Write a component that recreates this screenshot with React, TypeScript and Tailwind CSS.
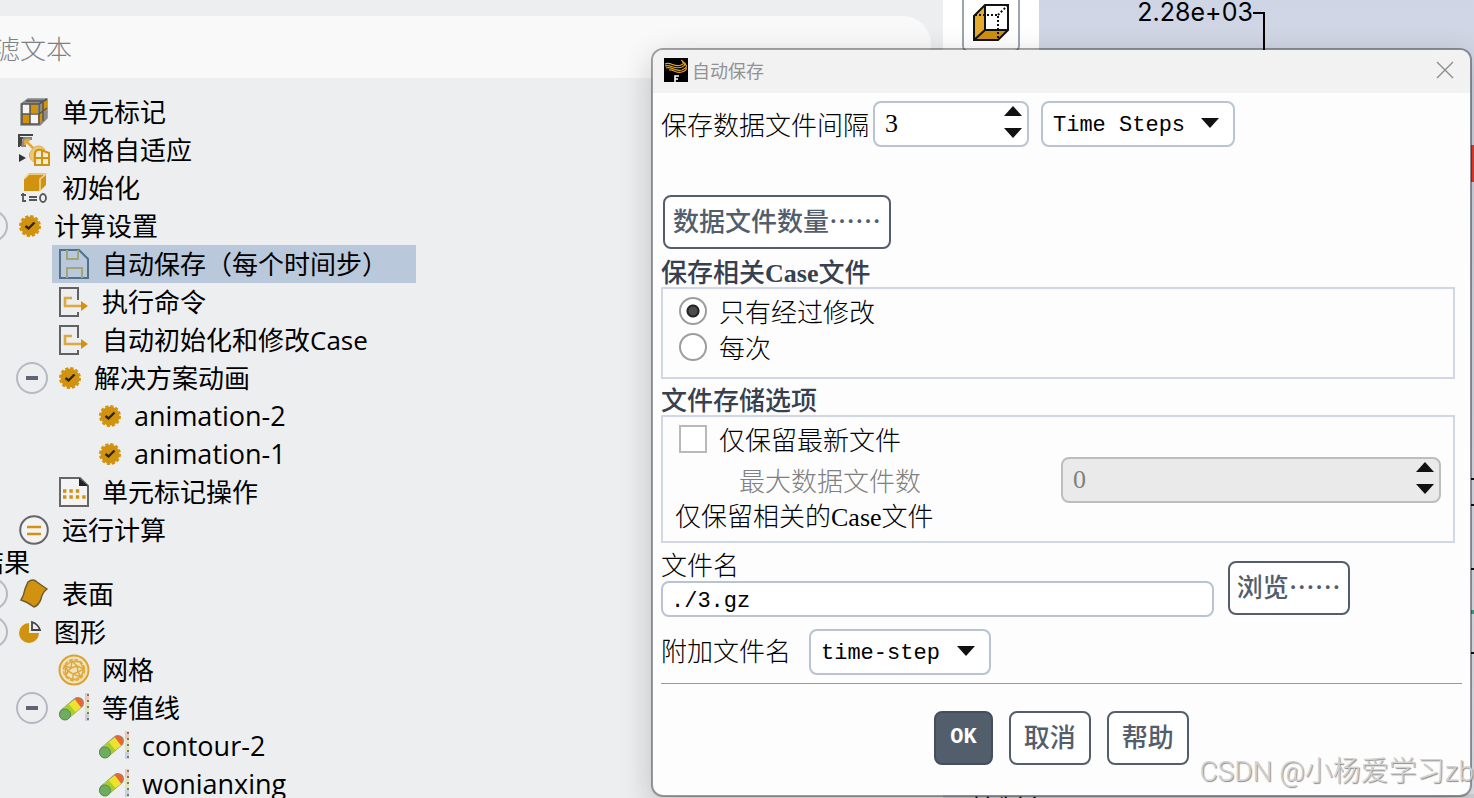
import { useState } from "react";
import type { ReactNode } from "react";

const GOLD = "#d1930f";

const CellCubeIcon = () => (
  <svg width="30" height="30" viewBox="0 0 30 30">
    <path d="M2 7L9 2H28V21L21 28H2Z" fill="#8b8b8b" stroke="#888" strokeWidth="1.5" />
    <path d="M3 7H20V27H3Z" fill="#f4f4f4" />
    <path d="M11 7h8v9h-8zM3 17h8v10H3z" fill={GOLD} />
    <path d="M23 6l5-3v10l-5 4zM19 18l5-4v9l-5 4z" fill={GOLD} />
    <path d="M3 7h17v20H3zM11 7v20M3 17h17l8-6M20 7l8-5M24 5v19M7 4h17" fill="none" stroke="#555" strokeWidth="1.5" />
  </svg>
);

const AdaptIcon = () => (
  <svg width="34" height="34" viewBox="0 0 34 34">
    <path d="M2 14V2H16M4 13V5H14" fill="none" stroke="#444" strokeWidth="2" />
    <path d="M6 4h9v3H9v7H4z" fill="#888" />
    <path d="M8 7L17 16M8 7v5M8 7h5" stroke="#e0a83a" strokeWidth="2.5" />
    <path d="M2 21l7 4-7 4z" fill="#333" />
    <path d="M14 18C17 12 25 11 28 17C25 15 19 17 17 20V29C13 27 11 22 14 18Z" fill="#ecc878" stroke="#e0b050" />
    <path d="M18 20Q19 16 24 17L32 20V32H18ZM25 18v14M18 25h14" fill="#f5ebd4" stroke={GOLD} strokeWidth="2" />
  </svg>
);

const InitIcon = () => (
  <svg width="30" height="34" viewBox="0 0 30 34">
    <path d="M5 8L10 2H27V14L21 20H5Z" fill={GOLD} />
    <path d="M5 8L10 3H27L21 8V20" fill="none" stroke="#f2d89b" strokeWidth="1.5" />
    <path d="M4 22v8h3M2 24h5M10 26h8M10 29h8" fill="none" stroke="#555" strokeWidth="1.8" />
    <ellipse cx="24" cy="27" rx="3" ry="4" fill="none" stroke="#555" strokeWidth="1.8" />
  </svg>
);

const GearCheckIcon = () => (
  <svg width="24" height="24" viewBox="0 0 24 24">
    <circle cx="12" cy="12" r="9.5" fill={GOLD} />
    <circle cx="12" cy="12" r="10" fill="none" stroke={GOLD} strokeWidth="2" strokeDasharray="3.2 2.036" />
    <path d="M7.5 12L10.5 14.5L16.5 8.5" fill="none" stroke="#2b2413" strokeWidth="2.4" />
  </svg>
);

const FloppyIcon = () => (
  <svg width="32" height="32" viewBox="0 0 32 32">
    <path d="M2 2H21L30 11V30H2Z" fill="none" stroke="#53708a" strokeWidth="2" />
    <path d="M9 2V11H20V2M9 30V20H24V30" fill="none" stroke="#a3a577" strokeWidth="2" />
  </svg>
);

const CommandIcon = () => (
  <svg width="32" height="32" viewBox="0 0 32 32">
    <path d="M20 14V2H2V30H20V26" fill="none" stroke="#626262" strokeWidth="2" />
    <path d="M14 12H7V20H24" fill="none" stroke="#dda841" strokeWidth="2.6" />
    <path d="M23 15L30 20L23 25Z" fill={GOLD} />
  </svg>
);

const CellFileIcon = () => (
  <svg width="32" height="32" viewBox="0 0 32 32">
    <path d="M2 2H22L30 10V30H2Z" fill="#f3f3f3" stroke="#666" strokeWidth="2" />
    <path d="M21 2V10H30Z" fill="#222" />
    <path d="M5 15H24M5 21H28" stroke={GOLD} strokeWidth="3.4" strokeDasharray="3.4 3" />
  </svg>
);

const RunIcon = () => (
  <svg width="32" height="32" viewBox="0 0 32 32">
    <circle cx="16" cy="16" r="13.8" fill="#f3f3f3" stroke="#666" strokeWidth="2" />
    <path d="M9 13H23M9 20H23" stroke={GOLD} strokeWidth="2.4" />
  </svg>
);

const SurfaceIcon = () => (
  <svg width="32" height="32" viewBox="0 0 32 32">
    <path d="M10 4Q15 0 19 4Q23 7 29 11Q24 15 23 21Q21 27 16 29Q10 24 3 22Q6 17 7 11Z" fill={GOLD} stroke="#6f5c2c" strokeWidth="1.5" />
  </svg>
);

const GraphicsIcon = () => (
  <svg width="24" height="24" viewBox="0 0 24 24">
    <path d="M11 3A10 10 0 1 0 21 13H11Z" fill={GOLD} />
    <path d="M14 10V2Q20 4 22 10Z" fill="#eee" stroke="#444" strokeWidth="1.8" />
  </svg>
);

const MeshIcon = () => (
  <svg width="32" height="32" viewBox="0 0 32 32">
    <circle cx="16" cy="16" r="14.5" fill="#f3e3bc" stroke="#d9a233" strokeWidth="2" />
    <circle cx="16" cy="16" r="10.5" fill="none" stroke="#dca93f" strokeWidth="1.5" strokeDasharray="4 1.5" />
    <path d="M7 12L14 7L22 8L26 15L23 23L15 26L8 22ZM7 12L13 14L14 7L19 12L26 15L20 18L23 23L15 20L15 26L8 22L10 17ZM13 14L19 12L20 18L15 20L10 17Z" fill="none" stroke="#dca93f" strokeWidth="1.5" />
  </svg>
);

const ContourIcon = () => (
  <svg width="32" height="32" viewBox="0 0 32 32">
    <path d="M7 22L20 11" stroke="#8b907c" strokeWidth="12" strokeLinecap="round" />
    <path d="M13 17L20 11" stroke="#ef6234" strokeWidth="10" strokeLinecap="round" />
    <path d="M9 20L20 11.5" stroke="#efe22f" strokeWidth="10.5" />
    <path d="M7 22L14 16" stroke="#a6cf2d" strokeWidth="10.5" />
    <circle cx="7" cy="22.5" r="5.5" fill="#6dad5d" stroke="#5b8b51" />
    <path d="M29 1V9" stroke="#efc5b8" strokeWidth="4" />
    <path d="M29 9V22" stroke="#dfe5b4" strokeWidth="4" />
    <path d="M29 22V29" stroke="#c3d2de" strokeWidth="4" />
    <path d="M30 2V30" stroke="#7d7d6c" strokeWidth="2" strokeDasharray="2 4" />
  </svg>
);

const BoxIcon = () => (
  <svg width="38" height="38" viewBox="0 0 38 38">
    <path d="M2 12L13 1V26L2 36Z" fill="#e4ab2f" />
    <path d="M2 36L13 26H36L26 36Z" fill="#cc9012" />
    <path d="M13 1H36V26H13Z" fill="#fff" />
    <path d="M13 1H36V26L26 36H2V12ZM13 1V26H36M13 26L2 36" fill="none" stroke="#111" strokeWidth="2" />
    <path d="M3 11H26V36M26 11L35 2" fill="none" stroke="#111" strokeWidth="2" strokeDasharray="2 2" />
  </svg>
);

const FluentLogo = () => (
  <svg width="24" height="24" viewBox="0 0 24 24">
    <rect width="24" height="24" fill="#000" />
    <path d="M1 6C7 3 10 10 17 7C20 6 21 4 17 2M1 8C7 6 10 12 18 9C22 7 23 5 18 4M2 10C8 8 10 14 18 12C23 10 24 7 20 6M5 12C10 11 12 16 18 14C22 13 23 11 22 9" fill="none" stroke="#e5a322" strokeWidth="1.1" />
    <path d="M11 24V18H15M11 21H14" fill="none" stroke="#fff" strokeWidth="1.6" />
  </svg>
);

type Node = {
  label: string;
  level: 0 | 1 | 2;
  icon: ReactNode;
  small?: boolean;
  latin?: boolean;
  expander?: boolean;
  selected?: boolean;
};

const setup: Node[] = [
  { label: "单元标记", level: 0, icon: <CellCubeIcon /> },
  { label: "网格自适应", level: 0, icon: <AdaptIcon /> },
  { label: "初始化", level: 0, icon: <InitIcon /> },
  { label: "计算设置", level: 0, icon: <GearCheckIcon />, small: true, expander: true },
  { label: "自动保存（每个时间步）", level: 1, icon: <FloppyIcon />, selected: true },
  { label: "执行命令", level: 1, icon: <CommandIcon /> },
  { label: "自动初始化和修改Case", level: 1, icon: <CommandIcon /> },
  { label: "解决方案动画", level: 1, icon: <GearCheckIcon />, small: true, expander: true },
  { label: "animation-2", level: 2, icon: <GearCheckIcon />, small: true, latin: true },
  { label: "animation-1", level: 2, icon: <GearCheckIcon />, small: true, latin: true },
  { label: "单元标记操作", level: 1, icon: <CellFileIcon /> },
  { label: "运行计算", level: 0, icon: <RunIcon /> },
];

const results: Node[] = [
  { label: "表面", level: 0, icon: <SurfaceIcon />, expander: true },
  { label: "图形", level: 0, icon: <GraphicsIcon />, small: true, expander: true },
  { label: "网格", level: 1, icon: <MeshIcon /> },
  { label: "等值线", level: 1, icon: <ContourIcon />, expander: true },
  { label: "contour-2", level: 2, icon: <ContourIcon />, latin: true },
  { label: "wonianxing", level: 2, icon: <ContourIcon />, latin: true },
];

const indent = ["-ml-6", "ml-4", "ml-14"];

const TreeRow = ({ node }: { node: Node }) => (
  <li className={`flex h-[38px] items-center gap-1 ${indent[node.level]}`}>
    <span className="flex w-8 shrink-0">
      {node.expander && (
        <button
          type="button"
          aria-label={node.label}
          className="flex size-8 items-center justify-center rounded-full border-2 border-[#b3bac1]"
        >
          <span className="h-1 w-3 bg-[#5d6478]" />
        </button>
      )}
    </span>
    <span
      className={`flex h-full items-center gap-2.5 whitespace-nowrap pl-1 ${node.selected ? "bg-[#b9c8da] pr-7" : ""}`}
    >
      <span className={`flex shrink-0 items-center justify-center ${node.small ? "w-7" : "w-9"}`}>{node.icon}</span>
      <span className={node.latin ? "text-[27px]" : ""}>{node.label}</span>
    </span>
  </li>
);

const Triangle = ({ up = false }: { up?: boolean }) => (
  <svg width="18" height="10" viewBox="0 0 18 10">
    <path d={up ? "M0 10L9 0L18 10Z" : "M0 0L9 10L18 0Z"} fill="#111" />
  </svg>
);

type SpinProps = {
  id: string;
  value: number;
  onChange: (value: number) => void;
  disabled?: boolean;
  className: string;
};

const SpinBox = ({ id, value, onChange, disabled = false, className }: SpinProps) => (
  <div
    className={`flex h-[46px] items-center rounded-lg border-2 pr-[5px] pb-1 pl-2.5 ${className} ${
      disabled ? "border-[#bdbdbd] bg-[#eaeaea] text-[#808080]" : "border-[#b9c4d2] bg-white"
    }`}
  >
    <input
      id={id}
      type="text"
      inputMode="numeric"
      value={value}
      disabled={disabled}
      onChange={(e) => onChange(Number(e.target.value) || 0)}
      className="w-full min-w-0 flex-1 bg-transparent pt-1 font-['Liberation_Serif',serif] outline-none"
    />
    <div className="flex flex-col gap-3">
      <button type="button" aria-label="+" disabled={disabled} onClick={() => onChange(value + 1)} className="flex">
        <Triangle up />
      </button>
      <button type="button" aria-label="-" disabled={disabled} onClick={() => onChange(value - 1)} className="flex">
        <Triangle />
      </button>
    </div>
  </div>
);

const Select = ({ id, options, className }: { id: string; options: string[]; className: string }) => (
  <div className={`relative h-[46px] ${className}`}>
    <select
      id={id}
      aria-label={options[0]}
      className="h-full w-full appearance-none rounded-lg border-2 border-[#b9c4d2] bg-white px-2.5 pt-1 font-['Liberation_Mono',monospace] text-[22px] outline-none"
    >
      {options.map((option) => (
        <option key={option}>{option}</option>
      ))}
    </select>
    <span className="pointer-events-none absolute inset-y-0 right-4 flex items-center pb-0.5">
      <Triangle />
    </span>
  </div>
);

const outlineButton =
  "flex h-[54px] items-center justify-center rounded-lg border-2 border-[#535e6c] bg-white pb-1 font-medium text-[#535e6c]";

const AutoSaveDialog = () => {
  const [interval, setInterval] = useState(3);
  const [maxFiles, setMaxFiles] = useState(0);
  const [saveCase, setSaveCase] = useState("modified");
  const [keepLatest, setKeepLatest] = useState(false);
  const [fileName, setFileName] = useState("./3.gz");

  const radios = [
    { value: "modified", label: "只有经过修改" },
    { value: "each", label: "每次" },
  ];

  return (
    <div
      role="dialog"
      aria-labelledby="dialog-title"
      className="absolute top-12 right-0.5 left-[651px] rounded-xl border-2 border-black/35 bg-[#fdfdfd] bg-clip-padding font-['Noto_Sans_CJK_SC',sans-serif] text-[26px] leading-[30px] font-light text-black shadow-[0_10px_32px_rgba(0,0,0,0.2)]"
    >
      <header className="flex h-[43px] items-center gap-1 rounded-t-[10px] bg-[#f2f2f2] pr-4 pb-1 pl-[11px]">
        <FluentLogo />
        <h2 id="dialog-title" className="flex-1 text-lg leading-6 font-normal text-[#929292]">
          自动保存
        </h2>
        <button type="button" aria-label="关闭">
          <svg width="18" height="18" viewBox="0 0 18 18">
            <path d="M1 1L17 17M17 1L1 17" stroke="#8d8d8d" strokeWidth="1.4" />
          </svg>
        </button>
      </header>

      <form className="px-2 pt-2 pb-[30px]" onSubmit={(e) => e.preventDefault()}>
        <div className="flex items-center">
          <label htmlFor="interval">保存数据文件间隔</label>
          <SpinBox id="interval" value={interval} onChange={setInterval} className="ml-1 w-[156px]" />
          <Select id="unit" options={["Time Steps", "Flow Time"]} className="ml-3 w-[194px]" />
        </div>

        <button type="button" className={`${outlineButton} mt-12 ml-0.5 px-2`}>
          数据文件数量……
        </button>

        <h3 id="case-title" className="mt-2 h-[30px] leading-7 font-medium text-[#36404e]">
          保存相关<span className="font-['Liberation_Serif',serif] font-bold">Case</span>文件
        </h3>
        <div role="radiogroup" aria-labelledby="case-title" className="mr-[7px] border-2 border-[#d1d7e5] px-4 pt-1 pb-3">
          {radios.map((radio) => (
            <label key={radio.value} className="flex h-9 items-center gap-3">
              <input
                type="radio"
                name="saveCase"
                checked={saveCase === radio.value}
                onChange={() => setSaveCase(radio.value)}
                className="size-7 appearance-none rounded-full border-2 border-[#9d9d9d] bg-white checked:bg-[radial-gradient(circle,#4c4c4c_0_4px,#222_5px_6px,#fff_7px)]"
              />
              {radio.label}
            </label>
          ))}
        </div>

        <h3 className="mt-1.5 h-[30px] leading-7 font-medium text-[#36404e]">文件存储选项</h3>
        <div className="mr-[7px] border-2 border-[#d1d7e5] px-3 pt-1 pb-2.5">
          <label className="flex h-9 items-center gap-3 pl-1">
            <input
              type="checkbox"
              checked={keepLatest}
              onChange={(e) => setKeepLatest(e.target.checked)}
              className="size-7 appearance-none border-2 border-[#b9b9b9] bg-white checked:bg-[#535e6c]"
            />
            仅保留最新文件
          </label>
          <div className="flex items-center justify-between">
            <label htmlFor="maxFiles" className="pl-16 text-[#808080]">
              最大数据文件数
            </label>
            <SpinBox id="maxFiles" value={maxFiles} onChange={setMaxFiles} disabled={!keepLatest} className="w-[380px]" />
          </div>
          <p className="h-7 leading-6">
            仅保留相关的<span className="font-['Liberation_Serif',serif]">Case</span>文件
          </p>
        </div>

        <div className="mt-2 flex items-end gap-3.5">
          <div className="flex w-[69%] flex-col gap-1">
            <label htmlFor="fileName" className="leading-[26px]">
              文件名
            </label>
            <input
              id="fileName"
              type="text"
              value={fileName}
              onChange={(e) => setFileName(e.target.value)}
              className="h-9 rounded-lg border-2 border-[#b9c4d2] bg-white px-2 pt-1 font-['Liberation_Mono',monospace] text-[22px] outline-none"
            />
          </div>
          <button type="button" className={`${outlineButton} mb-0.5 px-[7px]`}>
            浏览……
          </button>
        </div>

        <div className="mt-3 flex items-center">
          <label htmlFor="suffix" className="pb-1">附加文件名</label>
          <Select id="suffix" options={["time-step", "flow-time"]} className="ml-[18px] w-[182px]" />
        </div>

        <hr className="mt-2 border-[#9a9a9a]" />

        <div className="mt-[27px] flex justify-center gap-4">
          <button
            type="submit"
            className="h-[54px] rounded-lg border-2 border-[#444f5e] bg-[#535e6c] px-3.5 font-['Liberation_Mono',monospace] text-[22px] font-bold text-white"
          >
            OK
          </button>
          <button type="button" className={`${outlineButton} px-[13px]`}>
            取消
          </button>
          <button type="button" className={`${outlineButton} px-[13px]`}>
            帮助
          </button>
        </div>
      </form>
    </div>
  );
};

export default function App() {
  return (
    <div className="relative flex h-screen overflow-hidden bg-[#eceef0] text-black">
      <aside className="w-[64%] shrink-0 overflow-hidden pt-4 font-['Open_Sans','Noto_Sans_CJK_SC',sans-serif] text-[26px] leading-[26px]">
        <div className="mr-3 flex h-[62px] items-center overflow-hidden rounded-tr-[28px] bg-[#f9f9f9]">
          <input
            type="text"
            aria-label="过滤文本"
            placeholder="过滤文本"
            className="-ml-8 w-full bg-transparent font-['Noto_Sans_CJK_SC',sans-serif] font-light outline-none placeholder:text-[#7d8186]"
          />
        </div>
        <ul className="pt-[15px]">
          {setup.map((node) => (
            <TreeRow key={node.label} node={node} />
          ))}
          <li className="-ml-[22px]">结果</li>
          {results.map((node) => (
            <TreeRow key={node.label} node={node} />
          ))}
        </ul>
      </aside>

      <main className="flex min-w-0 flex-1 flex-col">
        <div className="flex min-h-0 flex-1">
          <div className="flex w-24 shrink-0 justify-center bg-white">
            <button
              type="button"
              aria-label="视图"
              className="-mt-1.5 flex h-[58px] w-[58px] items-center justify-center rounded-md border-2 border-[#9aa5b0] bg-white"
            >
              <BoxIcon />
            </button>
          </div>
          <div className="relative flex-1 bg-linear-to-b from-[#cfd5e4] to-[#e6e9f0]">
            <div className="flex pl-[98px] font-[Inter,sans-serif] text-[25px] leading-6">
              2.28e+03
              <svg width="12" height="60" viewBox="0 0 12 60">
                <path d="M0 13H11V60" fill="none" stroke="#000" strokeWidth="2" />
              </svg>
            </div>
            <svg className="absolute top-0 right-0" width="4" height="700" viewBox="0 0 4 700">
              <path d="M1 145h3v37H1z" fill="#f0392b" />
              <path d="M1 479h3M1 505h3M1 569h3M1 653h3" stroke="#111" strokeWidth="2" />
              <path d="M1 612h3" stroke="#3fa58c" strokeWidth="4" />
            </svg>
          </div>
        </div>
        <div className="h-1 bg-[#d5d7da] pl-7 font-['Noto_Sans_CJK_SC',sans-serif] text-[26px] leading-7">控制台</div>
      </main>

      <AutoSaveDialog />

      <p className="pointer-events-none absolute right-0 bottom-2 font-[Roboto,'Noto_Sans_CJK_SC',sans-serif] text-[28px] leading-9 font-light whitespace-nowrap text-[#d2d2d2] [text-shadow:1px_1px_1px_#888]">
        CSDN @小杨爱学习zb
      </p>
    </div>
  );
}
